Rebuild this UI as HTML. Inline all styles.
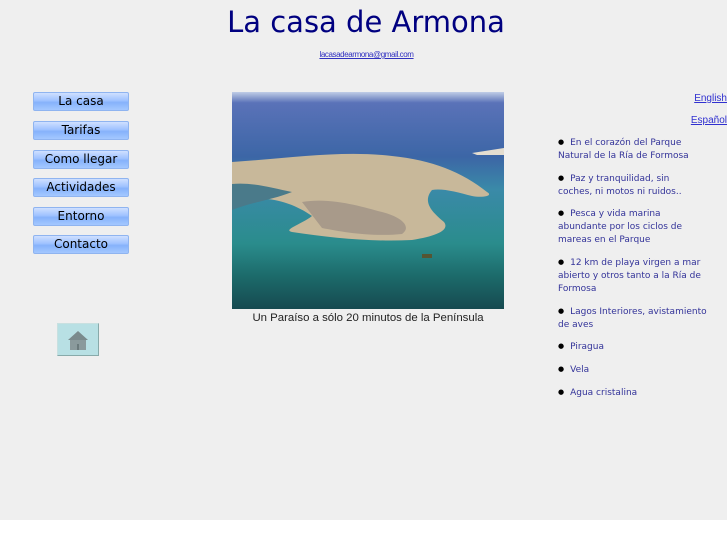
<!DOCTYPE html>
<html><head><meta charset="utf-8"><style>
html,body{margin:0;padding:0;width:727px;height:545px;background:#fff;overflow:hidden}
#bg{position:absolute;left:0;top:0;width:727px;height:520px;background:#efefef}
body{font-family:"DejaVu Sans","Liberation Sans",sans-serif}
.a{position:absolute}
h1{position:absolute;left:0;width:732px;top:5px;margin:0;text-align:center;font-weight:normal;font-size:29px;color:#000080}
.mail{left:0;width:733px;top:50px;text-align:center;font-size:8px;letter-spacing:-0.4px;font-family:"Liberation Sans",sans-serif}
.mail a{color:#3030c0}
.btn{position:absolute;left:33px;width:94px;height:17px;border:1px solid #8fb4f0;border-radius:2px;background:linear-gradient(#cfe0ff 0%,#9ec2ff 45%,#86b2fb 55%,#a4c8ff 100%);font-size:12px;color:#000;text-align:center;line-height:17px;font-family:"DejaVu Sans",sans-serif}
.home{left:57px;top:323px;width:40px;height:31px;background:#b8e0e4;border:1px solid #c8e0e0;border-right-color:#8aa;border-bottom-color:#8aa}
.cap{left:232px;width:272px;top:312px;text-align:center;font-size:11.4px;color:#222;font-family:"Liberation Sans",sans-serif}
ul{position:absolute;left:558px;top:137px;width:148px;margin:0;padding:0;list-style:none;font-size:9px;color:#333399;line-height:13px;font-family:"DejaVu Sans",sans-serif}
li{margin-bottom:9.7px}
li:before{content:"\25CF";color:#000;font-size:7px;margin-right:6px;position:relative;top:-1px}
.lang{font-size:10px;color:#3030d0;right:0;text-decoration:underline;font-family:"Liberation Sans",sans-serif}
</style></head><body>
<div id="bg"></div>
<h1>La casa de Armona</h1>
<div class="a mail"><a href="#">lacasadearmona@gmail.com</a></div>
<div class="btn" style="top:92px">La casa</div>
<div class="btn" style="top:121px">Tarifas</div>
<div class="btn" style="top:150px">Como llegar</div>
<div class="btn" style="top:178px">Actividades</div>
<div class="btn" style="top:207px">Entorno</div>
<div class="btn" style="top:235px">Contacto</div>
<div class="a home"><svg width="40" height="31"><polygon points="10,16 20,7 30,16" fill="#7a8a8c"/><rect x="12" y="16" width="16" height="10" fill="#8a9a9c"/><rect x="19" y="20" width="2" height="6" fill="#6a7a7c"/></svg></div>
<div class="a" style="left:232px;top:92px;width:272px;height:217px">
<svg width="272" height="217">
<defs><linearGradient id="s" x1="0" y1="0" x2="0" y2="1">
<stop offset="0" stop-color="#c0cde6"/><stop offset="0.05" stop-color="#5a72b8"/><stop offset="0.3" stop-color="#3c66a6"/><stop offset="0.45" stop-color="#3a8aa8"/><stop offset="0.7" stop-color="#2a8c8c"/><stop offset="0.85" stop-color="#1c6a6a"/><stop offset="1" stop-color="#164a50"/></linearGradient></defs>
<rect width="272" height="217" fill="url(#s)"/>
<polygon points="240,61 272,56 272,63 245,63" fill="#e4ddd0"/>
<path d="M0,70 C60,66 110,58 160,64 C200,68 230,80 255,100 C262,104 250,106 240,104 C225,100 210,96 200,98 C190,110 200,120 212,130 C218,138 205,144 180,148 C140,150 100,146 60,140 C50,138 70,132 80,124 C60,110 30,100 0,112 Z" fill="#c8b89a"/>
<path d="M70,110 C100,105 130,115 150,120 C170,125 180,135 170,142 C140,145 110,140 90,136 Z" fill="#a89a8a"/>
<path d="M0,92 C20,90 40,96 60,100 C40,108 20,110 0,118 Z" fill="#4a7a8a"/>
<rect x="190" y="162" width="10" height="4" fill="#553"/>
</svg></div>
<div class="a cap">Un Paraíso a sólo 20 minutos de la Península</div>
<div class="a lang" style="top:93px">English</div>
<div class="a lang" style="top:115px">Español</div>
<ul>
<li>En el corazón del Parque Natural de la Ría de Formosa</li>
<li>Paz y tranquilidad, sin coches, ni motos ni ruidos..</li>
<li>Pesca y vida marina abundante por los ciclos de mareas en el Parque</li>
<li>12 km de playa virgen a mar abierto y otros tanto a la Ría de Formosa</li>
<li><span style="white-space:nowrap">Lagos&nbsp;Interiores,&nbsp;avistamiento</span> de aves</li>
<li>Piragua</li>
<li>Vela</li>
<li>Agua cristalina</li>
</ul>
</body></html>
